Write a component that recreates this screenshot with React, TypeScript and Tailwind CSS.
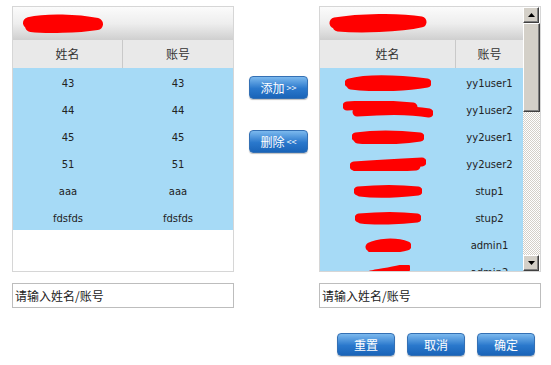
import React from "react";

const leftRows = [
  ["43", "43"],
  ["44", "44"],
  ["45", "45"],
  ["51", "51"],
  ["aaa", "aaa"],
  ["fdsfds", "fdsfds"],
];

// red marker strokes that hide names in the original capture
const scribbles: { w: number; h: number; d: string[] }[] = [
  { w: 86, h: 16, d: ["M4 8 C20 4 50 4 82 8 C60 12 30 13 6 10"] },
  { w: 90, h: 18, d: ["M4 5 C30 3 50 4 70 6", "M14 11 C40 9 70 9 86 12"] },
  { w: 72, h: 14, d: ["M4 7 C24 4 50 5 68 7 C50 10 20 11 6 9"] },
  { w: 76, h: 14, d: ["M4 9 C30 7 50 6 72 5", "M6 10 C30 11 50 10 66 9"] },
  { w: 68, h: 14, d: ["M4 7 C24 5 46 5 64 7 C46 9 20 10 6 8"] },
  { w: 66, h: 14, d: ["M4 7 C24 5 46 5 62 7 C46 9 20 10 6 8"] },
  { w: 46, h: 14, d: ["M5 9 C12 5 30 3 42 8 C30 11 14 12 6 10"] },
  { w: 44, h: 14, d: ["M5 10 C14 8 30 6 40 3"] },
];

const rightRows = [
  "yy1user1",
  "yy1user2",
  "yy2user1",
  "yy2user2",
  "stup1",
  "stup2",
  "admin1",
  "admin2",
];

function Scribble({ w, h, d, sw = 9 }: { w: number; h: number; d: string[]; sw?: number }) {
  return (
    <svg width={w} height={h} viewBox={`0 0 ${w} ${h}`} className="block">
      {d.map((p, i) => (
        <path
          key={i}
          d={p}
          fill="none"
          stroke="#ff0000"
          strokeWidth={sw}
          strokeLinecap="round"
          strokeLinejoin="round"
        />
      ))}
    </svg>
  );
}

function BlueButton({ children, className = "" }: { children: React.ReactNode; className?: string }) {
  return (
    <button
      className={
        "flex h-[23px] items-center justify-center rounded-[4px] border border-[#3470b4] bg-[linear-gradient(#7cb9ee,#2a78cc_55%,#1a64b8)] text-[12px] text-white shadow-[0_1px_1px_rgba(0,0,0,0.25)] " +
        className
      }
    >
      {children}
    </button>
  );
}

function TitleBar({ children }: { children: React.ReactNode }) {
  return (
    <div className="flex h-[33px] items-center bg-[linear-gradient(#fbfbfb,#eeeeee_50%,#cfcfcf)] pl-[9px]">
      {children}
    </div>
  );
}

function ScrollArrow({ up }: { up?: boolean }) {
  return (
    <div className="flex h-[16px] w-[16px] items-center justify-center border border-[#ffffff] border-r-[#404040] border-b-[#404040] bg-[#d4d0c8] shadow-[inset_-1px_-1px_0_#808080]">
      <svg width="7" height="4" viewBox="0 0 7 4">
        <path d={up ? "M0 4 L3.5 0 L7 4 Z" : "M0 0 L7 0 L3.5 4 Z"} fill="#000" />
      </svg>
    </div>
  );
}

export default function App() {
  return (
    <div className="h-[365px] w-[551px] overflow-hidden bg-white font-['DejaVu_Sans','Noto_Sans_CJK_SC',sans-serif] text-[#333]">
      <div className="flex pl-[12px] pt-[6px]">
        {/* left list */}
        <div className="w-[222px]">
          <div className="h-[266px] border border-[#d6d6d6] bg-white">
            <TitleBar>
              <Scribble w={82} h={22} sw={12} d={["M7 10 C25 6 55 7 75 11 C55 14 25 15 9 13"]} />
            </TitleBar>
            <div className="flex h-[28px] bg-[#e9e9e9] text-[12px] text-[#333] font-['Noto_Sans_CJK_SC',sans-serif]">
              <div className="flex w-[110px] items-center justify-center border-r border-[#c9c9c9]">姓名</div>
              <div className="flex flex-1 items-center justify-center">账号</div>
            </div>
            <div className="bg-[#a6daf6]">
              {leftRows.map((r, i) => (
                <div key={i} className="flex h-[27px] pt-[3px] text-[10px] text-[#222]">
                  <div className="flex w-[110px] items-center justify-center">{r[0]}</div>
                  <div className="flex flex-1 items-center justify-center">{r[1]}</div>
                </div>
              ))}
            </div>
          </div>
          <input
            className="mt-[11px] h-[25px] w-full border border-[#bdbdbd] px-[2px] text-[12px] outline-none placeholder:text-[#222] font-['Noto_Sans_CJK_SC',sans-serif]"
            placeholder="请输入姓名/账号"
          />
        </div>

        {/* move buttons */}
        <div className="flex w-[85px] flex-col gap-[31px] pl-[15px] pt-[70px]">
          <BlueButton className="w-[59px] gap-[2px] font-['Noto_Sans_CJK_SC',sans-serif]">
            添加<span className="text-[9px]">&gt;&gt;</span>
          </BlueButton>
          <BlueButton className="w-[59px] gap-[2px] font-['Noto_Sans_CJK_SC',sans-serif]">
            删除<span className="text-[9px]">&lt;&lt;</span>
          </BlueButton>
        </div>

        {/* right list */}
        <div className="w-[222px]">
          <div className="flex h-[266px] overflow-hidden border border-[#d6d6d6] bg-white">
            <div className="flex-1 overflow-hidden">
              <TitleBar>
                <Scribble w={98} h={22} sw={11} d={["M6 10 C30 6 70 5 92 9 C70 14 30 15 9 13"]} />
              </TitleBar>
              <div className="flex h-[28px] bg-[#e9e9e9] text-[12px] text-[#333] font-['Noto_Sans_CJK_SC',sans-serif]">
                <div className="flex w-[136px] items-center justify-center border-r border-[#c9c9c9]">姓名</div>
                <div className="flex flex-1 items-center justify-center">账号</div>
              </div>
              <div className="bg-[#a6daf6]">
                {rightRows.map((acc, i) => (
                  <div key={i} className="flex h-[27px] pt-[3px] text-[10px] text-[#222]">
                    <div className="flex w-[136px] items-center justify-center">
                      <Scribble {...scribbles[i]} />
                    </div>
                    <div className="flex flex-1 items-center justify-center">{acc}</div>
                  </div>
                ))}
              </div>
            </div>
            <div className="flex w-[17px] flex-col">
              <ScrollArrow up />
              <div className="h-[89px] border border-[#ffffff] border-r-[#404040] border-b-[#404040] bg-[#d4d0c8] shadow-[inset_-1px_-1px_0_#808080]" />
              <div className="flex-1 bg-[repeating-conic-gradient(#d4d0c8_0_25%,#ffffff_0_50%)] bg-[length:2px_2px]" />
              <ScrollArrow />
            </div>
          </div>
          <input
            className="mt-[11px] h-[25px] w-full border border-[#bdbdbd] px-[2px] text-[12px] outline-none placeholder:text-[#222] font-['Noto_Sans_CJK_SC',sans-serif]"
            placeholder="请输入姓名/账号"
          />
        </div>
      </div>

      <div className="mt-[25px] flex justify-end gap-[12px] pr-[16px] font-['Noto_Sans_CJK_SC',sans-serif]">
        <BlueButton className="w-[58px]">重置</BlueButton>
        <BlueButton className="w-[58px]">取消</BlueButton>
        <BlueButton className="w-[58px]">确定</BlueButton>
      </div>
    </div>
  );
}
